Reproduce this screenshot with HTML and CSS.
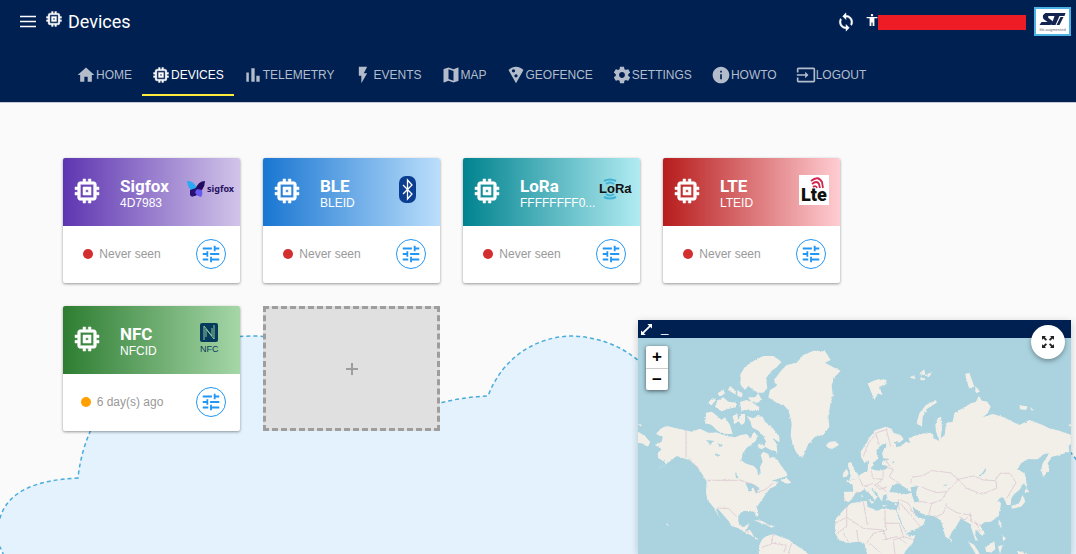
FILE: index.html
```
<!DOCTYPE html>
<html lang="en">
<head>
    <meta charset="UTF-8">
    <meta name="viewport" content="width=device-width, initial-scale=1.0">
    <title>Devices</title>
    <link rel="stylesheet" href="styles.css">
</head>
<body>

    <!-- Shared icons -->
    <svg class="sprite" aria-hidden="true">
        <symbol id="i-chip" viewBox="0 0 24 24"><path stroke="currentColor" stroke-width=".4" d="M15 9H9v6h6V9zm-2 4h-2v-2h2v2zm8-2V9h-2V7c0-1.100-.9-2-2-2h-2V3h-2v2h-2V3H9v2H7c-1.100 0-2 .9-2 2v2H3v2h2v2H3v2h2v2c0 1.100.9 2 2 2h2v2h2v-2h2v2h2v-2h2c1.100 0 2-.9 2-2v-2h2v-2h-2v-2h2zm-4 6H7V7h10v10z"/></symbol>
        <symbol id="i-tune" viewBox="0 0 24 24"><path d="M3 17v2h6v-2H3zM3 5v2h10V5H3zm10 16v-2h8v-2h-8v-2h-2v6h2zM7 9v2H3v2h4v2h2V9H7zm14 4v-2H11v2h10zm-6-4h2V7h4V5h-4V3h-2v6z"/></symbol>
    </svg>

    <!-- Cloud behind the page -->
    <svg class="cloud" viewBox="0 0 1076 234" preserveAspectRatio="xMinYMax slice" aria-hidden="true">
        <path d="M4 236Q2 231 0 227Q-14 213 0 198C8 171 36 160 78 158C86 80 150 16 255 16C320 18 370 45 395 100Q438 78 488 76C504 34 540 16 573 16C620 18 655 45 674 92L1000 92Q1050 100 1080 145L1080 240L4 240Z"/>
    </svg>

    <header class="header">
        <div class="topbar">
            <button class="icon-btn" aria-label="Menu">
                <svg class="icon" viewBox="0 0 20 20"><path d="M2 4.500h16M2 9.500h16M2 14.500h16" fill="none" stroke="currentColor" stroke-width="1.600"/></svg>
            </button>
            <svg class="icon title-icon"><use href="#i-chip"/></svg>
            <h1>Devices</h1>
            <button class="icon-btn sync" aria-label="Refresh">
                <svg class="icon" viewBox="0 0 24 24"><path stroke="currentColor" stroke-width=".5" d="M12 4V1L8 5l4 4V6c3.310 0 6 2.690 6 6 0 1.010-.25 1.970-.7 2.800l1.460 1.460C19.540 15.030 20 13.570 20 12c0-4.420-3.580-8-8-8zm0 14c-3.310 0-6-2.690-6-6 0-1.010.25-1.970.7-2.800L5.240 7.740C4.460 8.970 4 10.430 4 12c0 4.420 3.580 8 8 8v3l4-4-4-4v3z"/></svg>
            </button>
            <svg class="person" viewBox="3 2 18 20"><path d="M12 2c1.100 0 2 .9 2 2s-.9 2-2 2-2-.9-2-2 .9-2 2-2zm9 7h-5v13h-3v-6h-2v6H8V9H3V7h18v2z"/></svg>
            <span class="user"></span>
            <a class="brand" href="#" aria-label="ST">
                <svg viewBox="0 0 32 25">
                    <path d="M9 4H29L28 7H23L19 16H15L18 7H12Q11 8 12 9L16 12Q17 16 13 16H3L5 13H11L7 10Q5 6 9 4ZM24 8H27L23 16H20Z" fill="#12244f"/>
                    <text x="16" y="22" text-anchor="middle">life.augmented</text>
                </svg>
            </a>
        </div>

        <nav class="tabs">
            <a href="#"><svg class="icon" viewBox="0 0 24 24"><path d="M10 20v-6h4v6h5v-8h3L12 3 2 12h3v8z"/></svg>HOME</a>
            <a href="#" class="active"><svg class="icon"><use href="#i-chip"/></svg>DEVICES</a>
            <a href="#"><svg class="icon" viewBox="0 0 24 24"><path d="M4 9h3v11H4zM10 4h4v16h-4zM16 13h4v7h-4z"/></svg>TELEMETRY</a>
            <a href="#"><svg class="icon" viewBox="0 0 24 24"><path d="M7 2v11h3v9l7-12h-4l4-8z"/></svg>EVENTS</a>
            <a href="#"><svg class="icon" viewBox="0 0 24 24"><path d="M20.500 3l-.16.030L15 5.100 9 3 3.360 4.900c-.21.070-.36.250-.36.480V20.500c0 .28.220.5.500.5l.16-.03L9 18.900l6 2.100 5.640-1.900c.21-.07.360-.25.360-.48V3.500c0-.28-.22-.5-.5-.5zM15 19l-6-2.110V5l6 2.110V19z"/></svg>MAP</a>
            <a href="#"><svg class="icon" viewBox="0 0 24 24"><path fill-rule="evenodd" d="M12 2C8.430 2 5.230 3.540 3.010 6L12 22l8.990-16C18.780 3.550 15.570 2 12 2zM7 7a2 2 0 1 0 4 0 2 2 0 1 0-4 0zM10 13a2 2 0 1 0 4 0 2 2 0 1 0-4 0z"/></svg>GEOFENCE</a>
            <a href="#"><svg class="icon" viewBox="0 0 24 24"><path d="M19.430 12.980c.04-.32.070-.64.070-.98s-.03-.66-.07-.98l2.110-1.650c.19-.15.240-.42.120-.64l-2-3.460c-.12-.22-.39-.3-.61-.22l-2.490 1c-.52-.4-1.080-.73-1.690-.98l-.38-2.650C14.460 2.180 14.250 2 14 2h-4c-.25 0-.46.180-.49.420l-.38 2.650c-.61.250-1.170.59-1.690.98l-2.490-1c-.23-.09-.49 0-.61.220l-2 3.460c-.13.220-.07.490.12.640l2.110 1.650c-.04.320-.07.650-.07.980s.03.660.07.980l-2.110 1.650c-.19.150-.24.420-.12.640l2 3.460c.12.220.39.300.61.220l2.490-1c.52.400 1.080.730 1.690.980l.38 2.650c.03.240.24.420.49.420h4c.25 0 .46-.18.490-.42l.38-2.650c.61-.25 1.170-.59 1.690-.98l2.490 1c.23.090.49 0 .61-.22l2-3.460c.12-.22.070-.49-.12-.64l-2.110-1.650zM12 15.500c-1.930 0-3.500-1.570-3.500-3.500s1.570-3.500 3.500-3.500 3.500 1.570 3.500 3.500-1.570 3.500-3.500 3.500z"/></svg>SETTINGS</a>
            <a href="#"><svg class="icon" viewBox="0 0 24 24"><path d="M12 2C6.480 2 2 6.480 2 12s4.480 10 10 10 10-4.480 10-10S17.520 2 12 2zm1 15h-2v-6h2v6zm0-8h-2V7h2v2z"/></svg>HOWTO</a>
            <a href="#"><svg class="icon" viewBox="0 0 24 24"><path d="M21 3H3c-1.100 0-2 .9-2 2v4h2V5h18v14H3v-4H1v4c0 1.100.9 2 2 2h18c1.100 0 2-.9 2-2V5c0-1.100-.9-2-2-2zM11 16l4-4-4-4v3H1v2h10v3z"/></svg>LOGOUT</a>
        </nav>
    </header>

    <main class="devices">
        <article class="card">
            <div class="card-head sigfox">
                <svg class="chip"><use href="#i-chip"/></svg>
                <div class="name"><h2>Sigfox</h2><p>4D7983</p></div>
                <svg class="logo wide" viewBox="0 0 48 30">
                    <path d="M0 6Q6 5 10 13L7 17Q1 15 0 6Z" fill="#29a9f2"/>
                    <path d="M18 6Q11 6 8 15L4 21Q11 22 15 15Q18 11 18 6Z" fill="#230b62"/>
                    <path d="M3 15L9 13L8 20Q5 23 3 20Z" fill="#280f73"/>
                    <path d="M10 14L15 15Q16 20 14 22Q9 21 8 17Z" fill="#6659ef"/>
                    <text x="20" y="17" class="sigfox-text">sigfox</text>
                </svg>
            </div>
            <div class="card-body">
                <span class="status"><i class="dot red"></i>Never seen</span>
                <button class="tune" aria-label="Configure Sigfox"><svg><use href="#i-tune"/></svg></button>
            </div>
        </article>

        <article class="card">
            <div class="card-head ble">
                <svg class="chip"><use href="#i-chip"/></svg>
                <div class="name"><h2>BLE</h2><p>BLEID</p></div>
                <svg class="logo" viewBox="0 0 36 30">
                    <rect y="1" width="17" height="27" rx="7" fill="#0b3d91"/>
                    <path d="M4 10L13 19L8.500 24V5L13 10L4 19" fill="none" stroke="#fff" stroke-width="1.300"/>
                </svg>
            </div>
            <div class="card-body">
                <span class="status"><i class="dot red"></i>Never seen</span>
                <button class="tune" aria-label="Configure BLE"><svg><use href="#i-tune"/></svg></button>
            </div>
        </article>

        <article class="card">
            <div class="card-head lora">
                <svg class="chip"><use href="#i-chip"/></svg>
                <div class="name"><h2>LoRa</h2><p>FFFFFFFF0...</p></div>
                <svg class="logo" viewBox="0 0 36 30">
                    <g fill="none" stroke="#3fb3d6" stroke-width="2">
                        <path d="M5 6Q11 3 17 6M7 9Q11 6 15 9M5 22Q11 25 17 22M7 19Q11 22 15 19"/>
                    </g>
                    <text x="0" y="18" class="lora-text">LoRa</text>
                    <circle cx="31" cy="11" r="1" fill="#234"/>
                </svg>
            </div>
            <div class="card-body">
                <span class="status"><i class="dot red"></i>Never seen</span>
                <button class="tune" aria-label="Configure LoRa"><svg><use href="#i-tune"/></svg></button>
            </div>
        </article>

        <article class="card">
            <div class="card-head lte">
                <svg class="chip"><use href="#i-chip"/></svg>
                <div class="name"><h2>LTE</h2><p>LTEID</p></div>
                <svg class="logo" viewBox="0 0 36 30">
                    <rect width="30" height="30" fill="#fff"/>
                    <path d="M12 6Q19 0 23 7L24 13M13 9Q18 5 20 9L21 13M14 12Q17 10 18 13" fill="none" stroke="#d3264e" stroke-width="1.800"/>
                    <text x="2" y="26" class="lte-text">Lte</text>
                </svg>
            </div>
            <div class="card-body">
                <span class="status"><i class="dot red"></i>Never seen</span>
                <button class="tune" aria-label="Configure LTE"><svg><use href="#i-tune"/></svg></button>
            </div>
        </article>

        <article class="card">
            <div class="card-head nfc">
                <svg class="chip"><use href="#i-chip"/></svg>
                <div class="name"><h2>NFC</h2><p>NFCID</p></div>
                <svg class="logo" viewBox="0 0 36 30">
                    <rect x="1" width="18" height="19" rx="2" fill="#073b5c"/>
                    <path d="M5 17V3L13 13V5M7 14V6L15 16V2" fill="none" stroke="#8fc79a" stroke-width="1"/>
                    <text x="1" y="29" class="nfc-text">NFC</text>
                </svg>
            </div>
            <div class="card-body">
                <span class="status"><i class="dot orange"></i>6 day(s) ago</span>
                <button class="tune" aria-label="Configure NFC"><svg><use href="#i-tune"/></svg></button>
            </div>
        </article>

        <button class="add" aria-label="Add device">
            <svg viewBox="0 0 12 12"><path d="M6 0v12M0 6h12" stroke="#9e9e9e" stroke-width="2"/></svg>
        </button>
    </main>

    <!-- Floating map window -->
    <section class="map-window">
        <div class="map-bar">
            <button aria-label="Resize"><svg viewBox="0 0 12 12"><path d="M7 0h5v5l-1.800-1.800-7 7L5 12H0V7l1.800 1.800 7-7z"/></svg></button>
            <button class="minimize" aria-label="Minimize">_</button>
        </div>
        <div class="map">
            <svg class="world" viewBox="24 84 1299 648" preserveAspectRatio="xMinYMin slice" aria-label="World map">
                <defs>
                    <filter id="coast" x="0" y="0" width="100%" height="100%" color-interpolation-filters="sRGB">
                        <feTurbulence type="fractalNoise" baseFrequency="0.150" numOctaves="3" seed="4"/>
                        <feDisplacementMap in="SourceGraphic" scale="7" xChannelSelector="R" yChannelSelector="G"/>
                    </filter>
                </defs>
                <g filter="url(#coast)">
                    <rect x="0" y="60" width="1360" height="700" fill="#aad3df"/>
                    <g class="land">
                        <!-- North America -->
                        <path d="M78 372L92 356 110 347 135 354 167 361 185 365 210 356 235 368 262 368 290 378 315 382 330 376 350 372 362 385 372 365 384 378 370 400 352 412 338 430 334 452 350 462 372 468 382 480 384 498 392 490 390 470 398 455 392 435 400 425 415 432 420 446 430 440 445 452 455 470 470 488 472 498 450 505 425 512 445 515 438 527 420 536 410 548 395 570 380 592 386 612 382 622 372 605 355 603 340 602 325 615 325 638 338 652 350 645 358 640 352 655 345 662 362 662 372 680 390 690 378 688 362 675 345 668 325 655 305 648 295 632 280 615 262 595 258 600 272 628 262 612 248 588 232 570 228 545 230 515 215 490 200 470 178 450 160 445 140 438 125 450 105 465 75 482 108 462 100 452 85 445 82 430 95 418 75 405 95 395 98 380Z"/>
                        <path d="M228 308L245 305 262 318 275 330 285 322 300 345 308 372 285 372 262 362 245 345 225 340ZM308 318L322 312 326 335 312 342ZM332 312L345 312 345 338 334 345 325 332ZM232 280L248 264 258 270 245 286ZM255 290L262 272 280 262 295 275 318 278 318 292 295 296 275 304ZM262 250L280 240 285 250 270 260ZM294 240L300 228 315 240 318 254ZM322 240L338 252 335 262 322 258ZM330 276L350 270 368 278 388 292 386 303 352 300 334 302ZM355 262L375 262 385 250 394 268 385 278 362 276Z"/>
                        <path d="M350 318L370 325 378 318 398 320 405 335 425 350 440 370 452 388 445 395 430 385 440 405 442 428 418 418 400 408 408 395 402 380 385 362 365 352 362 335ZM345 385L358 390 365 408 350 402ZM388 398L405 412 395 418 382 410ZM452 512L468 502 484 518 470 522Z"/>
                        <path d="M330 195L345 170 375 150 400 138 430 138 455 155 440 172 425 182 408 205 412 235 400 248 385 248 370 240 355 228 345 240 332 225Z"/>
                        <!-- Greenland, Iceland -->
                        <path d="M455 180L470 165 500 158 520 135 550 122 585 124 602 150 585 158 610 172 632 182 615 200 605 225 608 255 600 290 595 320 598 350 580 375 555 380 535 402 525 425 518 444 500 430 488 405 482 375 485 340 475 300 460 285 440 278 415 262 420 240 440 228 432 210ZM587 404L600 395 618 394 627 405 605 418 592 412Z"/>
                        <path d="M24 365L45 378 60 395 55 410 35 400 24 398ZM24 342L36 344 30 350ZM370 630L395 632 418 645 400 642ZM408 645L435 648 425 653ZM110 640L118 644 114 648Z"/>
                        <path d="M385 740L388 705 398 686 410 678 430 672 455 682 475 688 490 700 520 720 545 740Z"/>
                        <!-- British Isles -->
                        <path d="M653 460L664 456 668 470 676 484 686 496 680 506 658 511 662 498 658 480ZM640 488L650 476 656 490 650 500 638 502Z"/>
                    </g>
                    <g class="land" transform="translate(648 0)">
                        <!-- Europe and Asia -->
                        <path d="M45 440L44 425 60 402 72 380 90 360 120 350 138 357 142 368 165 376 173 388 160 398 145 395 152 412 165 408 180 395 192 400 188 385 205 378 235 370 262 372 262 385 280 392 270 365 268 345 275 325 285 320 288 355 284 385 296 375 300 340 320 335 325 310 350 295 375 280 390 275 398 258 408 272 425 275 434 290 425 310 410 322 440 312 470 320 500 335 520 345 550 330 590 345 610 355 640 362 676 375 676 400 668 408 670 425 640 435 618 440 605 460 610 480 592 500 585 480 590 460 610 430 595 432 575 448 545 448 525 460 515 478 535 490 540 510 520 540 505 552 496 565 494 585 482 585 475 565 465 560 455 572 465 580 462 600 455 620 435 635 415 637 402 648 415 665 410 678 400 670 390 660 386 672 396 692 388 690 378 660 370 640 355 632 345 625 330 650 318 665 308 687 298 680 290 650 285 632 275 625 262 618 240 615 225 610 200 590 205 610 215 622 238 628 232 645 200 662 182 670 170 645 158 615 152 600 160 576 140 577 122 568 122 552 112 556 108 575 98 560 90 545 75 535 85 552 95 560 85 574 80 560 65 545 55 538 45 545 28 550 20 565 8 576 -6 574 -6 545 22 545 20 524 0 514 28 508 45 492 65 482 66 462 74 458 76 478 98 482 120 478 125 468 108 465 108 455 130 447 112 445 108 430 120 412 122 400 105 405 92 420 92 435 98 445 85 455 80 472 72 470 66 452 55 458Z"/>
                        <path d="M-33 650L-30 625 -12 605 2 590 15 580 40 575 62 572 65 590 95 602 110 595 150 600 160 630 178 665 190 680 208 675 200 700 180 720 170 740 65 740 55 700 40 695 0 698 -20 690 -33 670Z"/>
                        <!-- Islands -->
                        <path d="M65 220L95 208 122 210 118 225 100 230 110 256 96 250 85 270 75 245ZM270 270L272 278 245 295 230 320 228 350 212 340 220 310 240 285ZM358 192L370 188 376 205 385 230 370 235 362 215ZM388 228L402 245 388 250ZM190 202L205 196 208 208ZM218 192L235 178 238 196ZM238 196L260 186 248 202ZM222 205L238 204 232 212ZM520 285L545 290 540 300 522 298ZM552 294L566 298 558 302ZM665 345L678 342 678 350Z"/>
                        <path d="M540 535L550 545 534 550ZM530 555L538 575 525 590 500 596 495 588 520 580ZM534 485L540 505 542 535 534 520ZM458 628L466 640 466 655 458 645ZM468 675L480 685 472 694ZM366 694L385 705 406 740 394 740ZM418 712L445 694 448 718 435 728 420 725ZM456 708L470 706 462 732ZM513 722L535 728 560 740 520 740ZM310 682L318 690 314 698ZM455 608L460 612 456 622ZM65 566L82 576 78 582ZM46 552L52 560 48 568ZM108 586L125 586 112 590ZM146 582L156 580 148 588Z"/>
                    </g>
                    <g class="water">
                        <path d="M778 546L786 528 802 520 822 530 846 548 828 553 802 548ZM842 532L864 528 858 548 868 574 854 578 846 556ZM1045 498Q1060 490 1066 474L1068 480Q1062 496 1048 500ZM346 518L370 522 388 534 378 552 370 532 358 545ZM228 390L250 392 242 404ZM255 430L272 436 262 440ZM315 485L326 505 318 504ZM264 400L280 408 268 410ZM790 452L794 458 788 458ZM938 524L954 524 946 528Z"/>
                    </g>
                    <g class="borders">
                        <path d="M168 361V443M178 445L208 480M230 511H332L366 522 380 548 408 538 430 518M262 594L296 596 320 620M395 712L430 700 470 705 460 730M345 660L356 668M430 672L425 700M485 700L475 730"/>
                        <path d="M642 554L642 575M676 546L690 552M700 440L715 400 740 368 772 358M770 362L782 410M738 372L748 405M688 505L700 530 728 520 750 538 770 530M724 482L728 505 758 508 760 482M765 470L790 478 778 500 815 525M758 508L740 522 770 545M782 470L770 455 772 445"/>
                        <path d="M842 520L845 502 880 496 905 482 960 488 985 508 1030 498 1060 510 1095 512 1110 490 1140 490 1158 518 1130 565M985 508L1010 535 1055 552 1100 535 1098 512M985 510L950 545 920 548 875 532M868 574L905 580 935 570 950 545M812 570L835 580 850 610 870 605M905 580L895 620M950 580L940 610 915 622M950 590L980 608 1020 615 1005 630 988 620M1020 608L1025 635 1060 650M1035 632L1050 665M805 570L808 602M812 580L880 660"/>
                        <path d="M615 640L650 622 700 655 760 660 770 690M650 590L650 650 620 670M700 575L712 645M765 600V640H808M765 640L770 660 730 670 710 700M808 640L820 680 790 690M640 670L655 695M680 660L685 695M760 690L800 680 830 700M720 700L755 732M790 690L795 732M820 680L855 690"/>
                    </g>
                </g>
            </svg>
            <div class="zoom">
                <button aria-label="Zoom in">+</button>
                <button aria-label="Zoom out">−</button>
            </div>
        </div>
        <button class="expand" aria-label="Full screen">
            <svg viewBox="0 0 12 12"><path d="M0 0h4L2.800 1.200 5 3.500 3.800 4.700 1.200 2.400 0 4zM12 0v4l-1.200-1.600L8.200 4.700 7 3.500l2.200-2.300L8 0zM0 12V8l1.200 1.600 2.600-2.300L5 8.500l-2.200 2.300L4 12zM12 12H8l1.200-1.200L7 8.500l1.200-1.200 2.600 2.300L12 8z"/></svg>
        </button>
    </section>

</body>
</html>
```
FILE: styles.css
```
* {
    box-sizing: border-box;
}
body {
    margin: 0;
    min-height: 100vh;
    overflow: hidden;
    position: relative;
    font-family: "Liberation Sans", Arial, sans-serif;
    font-size: 12px;
    background-color: #fafafa;
}
h1, h2, p {
    margin: 0;
}
button {
    padding: 0;
    border: none;
    background: none;
    color: inherit;
    font-family: inherit;
    cursor: pointer;
}
svg {
    display: block;
    fill: currentColor;
}
.sprite {
    position: absolute;
    width: 0;
    height: 0;
}
.cloud {
    position: absolute;
    left: 0;
    bottom: 0;
    width: 100%;
    z-index: -1;
    fill: #e3f2fd;
    stroke: #4bacd9;
    stroke-width: 1.5;
    stroke-dasharray: 4 3;
}

/* Header */
.header {
    background-color: #002052;
    color: #fff;
    padding-bottom: 6px;
    border-bottom: 1px solid #c3c8d4;
}
.topbar {
    display: flex;
    align-items: center;
    height: 43px;
    padding: 0 5px 0 18px;
}
.icon {
    width: 20px;
    height: 20px;
}
.title-icon {
    margin: 0 4px 5px 6px;
}
h1 {
    font-family: Roboto, sans-serif;
    font-size: 18px;
    font-weight: 400;
}
.sync {
    margin-left: auto;
    margin-right: 10px;
}
.person {
    width: 12px;
    height: 12px;
    margin-bottom: 4px;
}
.user {
    width: 148px;
    height: 15px;
    margin-top: 2px;
    background-color: #ee1c25;
}
.brand {
    margin-left: 8px;
    padding: 0;
    border: 2px solid #4db3e6;
    background-color: #fff;
}
.brand svg {
    width: 33px;
    height: 25px;
}
.brand text {
    font-size: 4px;
    fill: #667;
}
.tabs {
    display: flex;
    padding: 11px 67px 0;
}
.tabs a {
    display: flex;
    align-items: center;
    height: 42px;
    padding: 2px 10px 0 9px;
    border-bottom: 2px solid transparent;
    color: #b2bccb;
    text-decoration: none;
}
.tabs .active {
    color: #fff;
    border-color: #ffeb3b;
}

/* Cards */
.devices {
    display: grid;
    grid-template-columns: repeat(auto-fill, 177px);
    gap: 23px;
    padding: 55px 63px;
}
.card {
    border-radius: 2px;
    background-color: #fff;
    box-shadow: 0 1px 3px rgba(0, 0, 0, 0.4);
    overflow: hidden;
}
.card-head {
    display: flex;
    align-items: center;
    height: 68px;
    padding: 0 5px 2px 8px;
    color: #fff;
}
.sigfox { background: linear-gradient(to right, #5e35b1, #d1c4e9); }
.ble { background: linear-gradient(to right, #1976d2, #bbdefb); }
.lora { background: linear-gradient(to right, #00838f, #b2ebf2); }
.lte { background: linear-gradient(to right, #b71c1c, #ffcdd2); }
.nfc { background: linear-gradient(to right, #2e7d32, #a5d6a7); }
.chip {
    flex: none;
    width: 32px;
    height: 32px;
}
.name {
    flex: 1;
    min-width: 0;
    margin-left: 17px;
    padding-top: 5px;
}
.name h2 {
    font-family: Roboto, sans-serif;
    font-size: 17px;
    line-height: 18px;
    font-weight: 700;
}
.name p {
    line-height: 16px;
    white-space: nowrap;
}
.logo {
    flex: none;
    width: 36px;
    height: 30px;
    margin-bottom: 2px;
}
.wide {
    width: 48px;
}
.sigfox-text {
    font-family: "Noto Sans", sans-serif;
    font-size: 9px;
    font-weight: 700;
    fill: #25105f;
}
.lora-text {
    font-size: 13px;
    font-weight: 700;
    fill: #111;
}
.lte-text {
    font-family: Roboto, sans-serif;
    font-size: 18px;
    font-weight: 900;
    fill: #111;
}
.nfc-text {
    font-size: 9px;
    fill: #073b5c;
}
.card-body {
    display: grid;
    grid-template-columns: 2fr 1fr;
    place-items: center;
    height: 57px;
    padding-bottom: 1px;
    color: #999;
}
.status {
    display: flex;
    align-items: center;
    gap: 6px;
}
.dot {
    width: 10px;
    height: 10px;
    border-radius: 50%;
}
.red { background-color: #d32f2f; }
.orange { background-color: #ffa000; }
.tune {
    width: 30px;
    height: 30px;
    border: 1px solid #2196f3;
    border-radius: 50%;
    color: #2196f3;
}
.tune svg {
    width: 22px;
    height: 22px;
    margin: auto;
}
.add {
    border: 3px dashed #9e9e9e;
    background-color: #e0e0e0;
}
.add svg {
    width: 12px;
    height: 12px;
    margin: auto;
}

/* Map window */
.map-window {
    position: absolute;
    right: 5px;
    bottom: 0;
    width: 433px;
    color: #fff;
    box-shadow: 0 2px 8px rgba(0, 0, 0, 0.2);
}
.map-bar {
    display: flex;
    align-items: center;
    gap: 9px;
    height: 18px;
    padding: 0 3px;
    background-color: #002052;
}
.map-bar svg {
    width: 11px;
    height: 11px;
}
.minimize {
    padding-bottom: 4px;
}
.map {
    position: relative;
    height: 216px;
    overflow: hidden;
    background-color: #aad3df;
}
.world {
    width: 100%;
    height: 100%;
}
.land {
    fill: #f2efe9;
}
.water {
    fill: #aad3df;
}
.borders {
    fill: none;
    stroke: #d6c0cd;
    stroke-width: 2;
}
.zoom {
    position: absolute;
    top: 8px;
    left: 8px;
    border-radius: 2px;
    background-color: #fff;
    box-shadow: 0 1px 4px rgba(0, 0, 0, 0.6);
}
.zoom button {
    display: block;
    width: 22px;
    height: 22px;
    color: #000;
    font-size: 17px;
    font-weight: 700;
    line-height: 22px;
}
.zoom button + button {
    border-top: 1px solid #ccc;
}
.expand {
    position: absolute;
    top: 5px;
    right: 6px;
    width: 34px;
    height: 34px;
    border-radius: 50%;
    background-color: #fff;
    color: #222;
    box-shadow: 0 2px 5px rgba(0, 0, 0, 0.35);
}
.expand svg {
    width: 12px;
    height: 12px;
    margin: auto;
}
```
